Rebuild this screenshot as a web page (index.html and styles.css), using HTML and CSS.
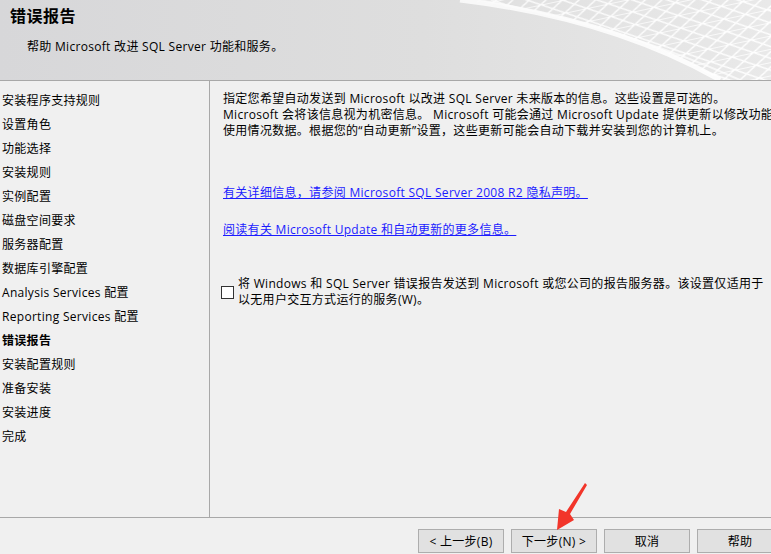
FILE: index.html
```html
<!DOCTYPE html>
<html lang="zh-CN">
<head>
  <meta charset="UTF-8" />
  <title>错误报告</title>
  <link rel="stylesheet" href="styles.css">
</head>
<body>
  <header class="banner">
    <svg class="banner-mesh" width="771" height="80" viewBox="0 0 771 80" aria-hidden="true">
      <defs>
        <pattern id="mesh" width="22" height="13" patternUnits="userSpaceOnUse" patternTransform="rotate(-12)">
          <path d="M0 0 L22 13 M22 0 L0 13 M0 0 L22 0" stroke="#ffffff" stroke-width="1.5" fill="none" />
        </pattern>
        <linearGradient id="fade" x1="0" y1="0" x2="1" y2="0">
          <stop offset="0" stop-color="#ffffff" stop-opacity="0.3" />
          <stop offset="0.5" stop-color="#ffffff" stop-opacity="0.8" />
          <stop offset="1" stop-color="#ffffff" stop-opacity="1" />
        </linearGradient>
        <mask id="fadeMask">
          <rect width="771" height="80" fill="url(#fade)" />
        </mask>
      </defs>
      <g mask="url(#fadeMask)">
        <path d="M460 0 Q610 18 720 80 L771 80 L771 0 Z" fill="url(#mesh)" />
        <path d="M460 0 Q610 18 720 80" stroke="#ffffff" stroke-width="5" fill="none" opacity="0.9" />
        <path d="M480 0 Q620 26 740 80" stroke="#ffffff" stroke-width="2" fill="none" opacity="0.7" />
      </g>
    </svg>
    <h1>错误报告</h1>
    <p class="subtitle">帮助 Microsoft 改进 SQL Server 功能和服务。</p>
  </header>

  <main class="wizard">
    <nav class="steps">
      <div>安装程序支持规则</div>
      <div>设置角色</div>
      <div>功能选择</div>
      <div>安装规则</div>
      <div>实例配置</div>
      <div>磁盘空间要求</div>
      <div>服务器配置</div>
      <div>数据库引擎配置</div>
      <div>Analysis Services 配置</div>
      <div>Reporting Services 配置</div>
      <div class="current">错误报告</div>
      <div>安装配置规则</div>
      <div>准备安装</div>
      <div>安装进度</div>
      <div>完成</div>
    </nav>

    <section class="page">
      <p class="intro">
        指定您希望自动发送到 Microsoft 以改进 SQL Server 未来版本的信息。这些设置是可选的。<br />
        Microsoft 会将该信息视为机密信息。 Microsoft 可能会通过 Microsoft Update 提供更新以修改功能<br />
        使用情况数据。根据您的“自动更新”设置，这些更新可能会自动下载并安装到您的计算机上。
      </p>

      <a class="link link-privacy" href="#">有关详细信息，请参阅 Microsoft SQL Server 2008 R2 隐私声明。</a>
      <a class="link link-update" href="#">阅读有关 Microsoft Update 和自动更新的更多信息。</a>

      <label class="report-option">
        <span class="box"></span>
        <span>将 Windows 和 SQL Server 错误报告发送到 Microsoft 或您公司的报告服务器。该设置仅适用于<br />以无用户交互方式运行的服务(W)。</span>
      </label>
    </section>
  </main>

  <footer class="buttons">
    <button>&lt; 上一步(B)</button>
    <button>下一步(N) &gt;</button>
    <button>取消</button>
    <button>帮助</button>
  </footer>

  <svg class="pointer" width="40" height="52" viewBox="550 480 40 52" aria-hidden="true">
    <polygon points="585,483 587,485 570,514 574,520 557,530 559,509 566,512" fill="#f2352a" />
  </svg>
</body>
</html>
```

FILE: styles.css
```css
* {
  box-sizing: border-box;
}

html,
body {
  margin: 0;
  height: 100%;
  overflow: hidden;
}

body {
  font-family: "Open Sans", "Noto Sans CJK SC", sans-serif;
  font-size: 12px;
  letter-spacing: 0.3px;
  color: #000;
  background: #f0f0f0;
  position: relative;
}

.banner {
  position: relative;
  height: 81px;
  background: linear-gradient(to right, #d7d7d9 0%, #dedede 55%, #e9e9e9 100%);
  border-bottom: 1px solid #a8a8a8;
  overflow: hidden;
}

.banner-mesh {
  position: absolute;
  top: 0;
  left: 0;
}

.banner h1 {
  position: relative;
  margin: 0;
  padding: 4px 0 0 10px;
  font-size: 16px;
  line-height: 24px;
  font-weight: bold;
  letter-spacing: 0.5px;
}

.subtitle {
  position: relative;
  margin: 0;
  padding: 11px 0 0 27px;
  line-height: 16px;
}

.wizard {
  display: flex;
  height: 437px;
  border-bottom: 1px solid #a8a8a8;
}

.steps {
  width: 210px;
  flex-shrink: 0;
  padding: 8px 0 0 2px;
  border-right: 1px solid #a8a8a8;
}

.steps div {
  line-height: 24px;
  white-space: nowrap;
}

.steps .current {
  font-weight: bold;
}

.page {
  flex: 1;
  padding: 10px 0 0 13px;
  white-space: nowrap;
  overflow: hidden;
}

.intro {
  margin: 0;
  line-height: 16px;
}

.link {
  display: block;
  width: max-content;
  color: #1c1cff;
  line-height: 16px;
  text-decoration: underline;
}

.link-privacy {
  margin-top: 46px;
}

.link-update {
  margin-top: 21px;
}

.report-option {
  display: flex;
  align-items: center;
  gap: 4px;
  margin-top: 38px;
  margin-left: -2px;
  line-height: 16px;
}

.box {
  width: 13px;
  height: 13px;
  border: 1px solid #333;
  background: #fff;
  flex-shrink: 0;
}

.buttons {
  display: flex;
  gap: 7px;
  padding: 11px 0 0 418px;
}

.buttons button {
  width: 86px;
  height: 24px;
  flex-shrink: 0;
  border: 1px solid #adadad;
  background: #e1e1e1;
  font-family: inherit;
  font-size: 12px;
  letter-spacing: 0.3px;
  color: #000;
  padding: 0;
}

.pointer {
  position: absolute;
  left: 550px;
  top: 480px;
}
```
